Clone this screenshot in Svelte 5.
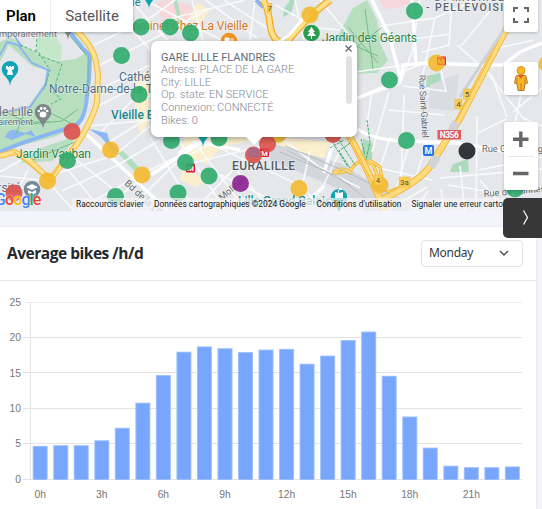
<script>
  const hours = [4.75, 4.85, 4.85, 5.55, 7.3, 10.85, 14.75, 18.05, 18.8, 18.55, 18, 18.35, 18.45, 16.35, 17.5, 19.7, 20.9, 14.65, 8.9, 4.5, 1.95, 1.75, 1.75, 1.85];
  const ticks = [25, 20, 15, 10, 5, 0];
  const y = (v) => 199.5 - v * 7.08;

  const green = '#2eab6b', yellow = '#f4b92c', red = '#dc504a';
  const stations = [
    [141, 27, green], [170, 27, green], [190.5, 33, green], [121.5, 55.5, green], [139, 94.5, green],
    [310, 15, yellow], [414.5, 11, green], [436.5, 63, yellow], [389.5, 80, green],
    [72, 131.5, red], [67.5, 160.5, green], [110.5, 150, yellow], [47.5, 181, yellow], [142, 175, yellow],
    [14, 193, red], [115.5, 196.5, green], [171.5, 140.5, green], [219, 138, green], [185.5, 162.5, green],
    [209, 176, green], [178, 193, green], [278, 134.5, yellow], [267.5, 144, red], [253.5, 155, red],
    [240.5, 183.5, '#8a218f'], [299, 188.5, yellow], [333, 134.5, red], [406.5, 140.5, green],
    [467, 151, '#202124'], [380, 185, yellow], [515, 189, green], [547, 64, yellow]
  ];

  const streets = [
    'M94 45L150 18L175 0', 'M98 66L155 38L207 10', 'M98 90L150 65', 'M105 0L165 66', 'M130 0L175 48',
    'M94 108L150 80', 'M88 126L150 120', 'M145 0L240 50', 'M192 0L205 48', 'M165 20L245 0', 'M206 0L257 38',
    'M224 0L270 30', 'M255 0L250 40', 'M295 0L305 45', 'M320 0L350 36',
    'M70 155L112 188L142 215', 'M60 160L94 201L105 215', 'M51 175L115 155L150 126',
    'M62 191L118 165L160 140', 'M77 210L140 175L210 140', 'M48 182L76 213', 'M28 170L18 190', 'M0 176L40 180',
    'M21 160L0 172', 'M101 132L132 101L150 96', 'M106 144L153 115', 'M100 211L143 178L185 154', 'M125 213L174 165L219 137',
    'M150 137L195 211', 'M170 127L222 205', 'M193 140L245 209', 'M206 142L297 184L333 216', 'M180 166L246 150L287 140',
    'M190 215L235 168L275 215', 'M219 174L294 211', 'M280 137L319 167L360 188', 'M348 73L406 65L437 64',
    'M381 26L435 18L475 0', 'M393 42L450 34', 'M399 73L425 63L480 64', 'M420 0L412 52L400 84', 'M435 18L421 83',
    'M452 0L449 45L422 52', 'M461 46L490 11', 'M457 45L492 76L507 117', 'M440 66L446 91L402 86',
    'M401 84L350 101', 'M372 91L367 125', 'M389 92L372 152', 'M404 95L401 185', 'M388 110L445 115',
    'M390 137L376 181', 'M410 141L396 190', 'M427 142L413 187', 'M370 166L432 180',
    'M453 140L475 151L504 147', 'M460 166L465 211', 'M477 116L476 211', 'M478 133L506 119', 'M479 170L542 157',
    'M440 178L542 169', 'M448 185L510 195L542 187', 'M480 180L505 210', 'M485 70L523 118L542 126',
    'M493 49L534 40', 'M513 112L542 88', 'M522 89L508 157L517 211', 'M428 191L413 213', 'M441 189L444 211',
    'M310 150L299 202', 'M340 151L320 192', 'M386 211L427 187', 'M275 5L318 28L340 30'
  ];
  const highways = 'M511 20L487 66L459 120Q440 150 431 165T383 199M344 127L355 146L369 174L385 211';
  const ramps = 'M350 171C358 157 372 158 376 172L382 188M352 174Q341 165 334 173L349 171M369 160L380 167L382 180M434 164Q415 184 385 193';
  const ring = 'M77 31Q92 45 96 61L98 74L97 102Q93 119 77 144L50 180L29 160L14 152L0 156';
</script>

<div class="page">
  <section class="map">
    <svg class="canvas" width="542" height="211" viewBox="0 0 542 211">
      <rect width="542" height="211" fill="#e5e7eb" />
      <path d="M0 42L10 37L36 53L58 33L76 31L87 52L87 105L80 125L54 137L0 151Z" fill="#b7dfbf" />
      <path d="M30 38L61 33L79 36L84 54L76 59L59 61L37 55Z" fill="#e5e7eb" />
      <path d="M36 56L37 37L52 32L62 46L61 60Z" fill="#c4e7ca" />
      <path d="M0 62L9 45L20 55L32 66L47 70L44 84L28 107L0 113Z" fill="#e5e7eb" />
      <path d="M20 163L38 149L76 136L65 153L51 161Z" fill="#b7dfbf" />
      <path d="M156 2L170 0L189 4L201 15L165 29Z" fill="#f6d8da" />
      <path d="M380 0H417L397 8L383 9Z" fill="#f6d8da" />
      <path d="M338 36L353 8L367 0L377 20L380 43L388 60L377 73L350 74L338 67Z" fill="#b7dfbf" />
      <path d="M284 9L290 0H295L291 13L283 17ZM427 76L440 73L442 87L426 87ZM453 164L468 159L469 172L450 172ZM363 138L373 144L372 159L361 164Z" fill="#addabd" />
      <path d="M118 153L122 150L140 168L135 172ZM173 0H177L183 25H179Z" fill="#b1dec0" />
      <path d="M133 81L149 69L150 119L141 136L136 118ZM197 3L210 10L201 23L189 18ZM184 137L275 137L330 142L323 161L290 151L255 140L221 147L207 164L180 154ZM183 166L207 181L196 187L180 180Z" fill="#fbf0ce" />
      <path d="M272 143L342 164L388 193L410 201V211H365L342 190L270 160Z" fill="#d3d7dc" />
      <path d="M430 85L459 73L455 111L429 108Z" fill="#dadce1" />

      <g fill="none" stroke="#f9fafb" stroke-width="1.6">
        {#each streets as d}<path {d} />{/each}
      </g>
      <g fill="none" stroke="#ffffff" stroke-width="3.4">
        <path d="M82 130L131 176L172 215M350 101L401 80L403 65L425 63L480 65L503 65L520 52L542 43M358 129Q372 140 406 141L458 143L504 151M178 154L196 142L240 150M372 0L389 35L401 80M412 0L416 65M151 175L200 143M297 184L308 202L324 186M333 143L324 173" />
      </g>
      <g fill="none" stroke="#8cb6f2" stroke-width="4">
        <path d="M70 32L82 48L90 55L89 78L87 96Q85 119 77 124C60 132 28 139 0 152" />
        <path d="M0 55L7 42L18 45L32 63L48 70L46 84L30 107L0 113M11 31L22 47" stroke-width="2" />
        <path d="M256 0L263 7" />
      </g>
      <path d="M5 137Q10 127 18 131T31 130L36 137L26 134L12 140ZM89 129L107 133L110 143L119 151L115 154L101 137Z" fill="#8db7f1" />
      <path d="M38 55L62 64L53 92L61 99L51 104M36 52L37 37M20 45L39 53L50 70L44 89" fill="none" stroke="#50b578" stroke-width="1" stroke-dasharray="3 2" />
      <path d="M3 111L30 124L62 121L78 109M5 122L50 122M25 111L16 134M48 112L75 125M30 161L75 142M342 40L378 56M340 60L381 28M365 9L373 69M348 27L378 63M70 36L88 57V96" fill="none" stroke="#75bb87" stroke-width="1" />

      <g fill="none" stroke-linejoin="round">
        <path d={ring} stroke="#f5be41" stroke-width="6" />
        <path d={ring} stroke="#fde293" stroke-width="3.8" />
        <path d="M51 178L75 142M14 152L49 181" stroke="#f4bd3f" stroke-width="1.3" />
        <path d="M263 0Q268 7 270 24T283 43M330 0Q306 18 287 42" stroke="#f3ab1d" stroke-width="7" />
        <path d="M263 0Q268 7 270 24T283 43M330 0Q306 18 287 42" stroke="#fde08a" stroke-width="4.5" />
        <path d="M308 13L289 35L278 43" stroke="white" stroke-width="3" />
        <path d={ramps} stroke="#f5b329" stroke-width="3.5" />
        <path d={ramps} stroke="#fddb7d" stroke-width="1.7" />
        <path d={highways} stroke="#f4b534" stroke-width="7" />
        <path d={highways} stroke="#fddb7d" stroke-width="5" />
        <path d="M509 20L484 69L456 121M349 137L378 194" stroke="#f4b334" stroke-width="1" />
        <path d="M456 122L450 134M437 156L431 167" stroke="#d1d3d6" stroke-width="8" />
        <path d="M505 28L480 66L460 97" stroke="#cfd2d5" stroke-width="3" />
        <path d="M285 146L345 171L390 194M280 152L337 176L374 205M287 150L350 185" stroke="#b9bec6" stroke-width="1" />
        <path d="M333 143L348 167M339 140L355 165M350 143L339 151L350 168M330 148L344 140M367 120L370 142L366 160M361 139L365 155" stroke="#3dac64" stroke-dasharray="3 1" />
      </g>

      <g class="halo">
        <text x="-6" y="37" font-size="9.3" fill="#6b7580" textLength="63">emporairement</text>
        <text x="-1" y="116" font-size="12" fill="#657080">le Lille</text>
        <text x="-2" y="125" font-size="9.5" fill="#657080" textLength="35">airement</text>
        <text x="119" y="81" font-size="12" fill="#4f6f87">Cathédrale</text>
        <text x="49" y="93" font-size="12" fill="#4f6f87">Notre-Dame-de-la-Tr</text>
        <text x="111" y="119" font-size="12" font-weight="500" fill="#16868d">Vieille Bourse</text>
        <text x="16" y="158" font-size="12" fill="#278343" textLength="75">Jardin Vauban</text>
        <text x="133" y="30" font-size="12" fill="#d57925" textLength="115">aminet Chez La Vieille</text>
        <text x="322" y="42" font-size="12" fill="#278343" textLength="95">Jardin des Géants</text>
        <text x="132" y="6" font-size="11" fill="#16868d">le</text>
        <text x="434" y="1" font-size="10.5" fill="#5b6067" textLength="70">ST-MAURICE</text>
        <text x="426" y="11" font-size="10.5" fill="#5b6067" font-weight="500" textLength="86">- PELLEVOISIN</text>
        <text x="232" y="170" font-size="12" fill="#515961" font-weight="500" textLength="63">EURALILLE</text>
        <text x="419" y="75" font-size="9" fill="#61676d" transform="rotate(87 419 75)" textLength="63">Rue Saint-Gabriel</text>
        <text x="482" y="152" font-size="9.3" fill="#61676d">Rue Gutenberg</text>
        <text x="484" y="197" font-size="9.3" fill="#61676d" transform="rotate(-5 484 197)">Rue de Cannes</text>
        <text x="124" y="184" font-size="9.5" fill="#61676d" transform="rotate(43 124 184)">Bd de la Liberté</text>
        <text x="222" y="201" font-size="9.5" fill="#61676d" transform="rotate(-40 222 201)">Molinel</text>
        <text x="238" y="205" font-size="12" font-weight="500" fill="#16868d">Lille Grand Palais</text>
        <text x="-9" y="192" font-size="12" fill="#657080">ersité</text>
      </g>

      {#each [[10, 69, '#12a5b8'], [149, -8, '#12a5b8'], [68, 23, '#80868b'], [43, 112, '#7e8788'], [203, 130, '#12a5b8'], [339, 197, '#12a5b8'], [32, 189, '#738a9b']] as [px, py, color]}
        <path d={`M${px} ${py + 17}Q${px} ${py + 12} ${px - 6} ${py + 6}A8.3 8.3 0 1 1 ${px + 6} ${py + 6}Q${px} ${py + 12} ${px} ${py + 17}Z`} fill={color} />
      {/each}
      <path d="M6 66V69L8 70L7 75H13L12 70L14 69V66H12V67H11V66H9V67H8V66Z" fill="white" />
      <g fill="white"><ellipse cx="43" cy="114.5" rx="3.4" ry="3" /><circle cx="38.8" cy="111" r="1.3" /><circle cx="41.2" cy="108.5" r="1.4" /><circle cx="44.8" cy="108.5" r="1.4" /><circle cx="47.2" cy="111" r="1.3" /></g>
      <path d="M26 187L32 184L38 187L32 190ZM28 190L32 192L36 190V193L32 195L28 193ZM335 195V192L338 193V190H339V188H342V190H339V193L343 192V198H335Z" fill="white" />
      <circle cx="229" cy="41" r="8.3" fill="#f29422" />
      <path d="M225 38H229V42H225ZM231 38V43M233 38V43" stroke="white" fill="white" />
      <circle cx="311.5" cy="33" r="8.3" fill="#2a9d4e" />
      <path d="M311.5 27L308 32H310L307 36H311V39H312V36H316L313 32H315Z" fill="white" />
      {#each [[190.5, 168], [264.5, 152.5], [441.5, 61]] as [mx, my]}
        <rect x={mx - 4.5} y={my - 4.5} width="9" height="9" rx="1" fill="#dc1736" />
        <text x={mx} y={my + 3} font-size="8" font-weight="700" text-anchor="middle" fill="white">M</text>
      {/each}
      {#each stations as [cx, cy, color]}
        <circle {cx} {cy} r="8.5" fill={color} fill-opacity=".9" />
      {/each}
      <rect x="248.5" y="148" width="10" height="9" rx="2" fill="#7772a8" opacity=".75" />
      <path d="M251 150H256V154H251ZM251 156L256 153" stroke="#e06364" fill="none" />
      <rect x="437" y="57" width="8.5" height="8" fill="#f4732b" opacity=".75" />
      <text x="441" y="64" font-size="8" font-weight="700" text-anchor="middle" fill="#f3b23c">M</text>
      <rect x="423" y="145" width="11" height="11" rx="2" fill="#1a73e8" />
      <text x="428.5" y="154" text-anchor="middle" font-size="9" font-weight="700" fill="white">M</text>
      <rect x="437.5" y="130" width="23.5" height="9.5" fill="#df5a5c" />
      <text x="449.2" y="138" text-anchor="middle" font-size="8.4" font-weight="700" fill="white" textLength="19">N356</text>
      {#each [[458.5, 104, '4'], [467, 94, '5'], [404.5, 182, '3a'], [378, 180, '4']] as [rx, ry, label]}
        <rect x={rx - (label.length > 1 ? 5.5 : 3.5)} y={ry - 5} width={label.length > 1 ? 11 : 7} height="10" fill="#f8ce50" stroke="#ecb73f" stroke-width=".5" />
        <text x={rx} y={ry + 3} text-anchor="middle" font-size="8" fill="#5b5237">{label}</text>
      {/each}
      <rect x="267" y="3" width="5" height="10" fill="#f8c64a" /><text x="267.5" y="11" font-size="8" fill="#634c1a">7</text>
    </svg>

    <div class="maptypes"><button class="chosen">Plan</button><button>Satellite</button></div>
    <div class="logo"><span class="blue">G</span><span class="red">o</span><span class="gold">o</span><span class="blue">g</span><span class="green">l</span><span class="red">e</span></div>
    <div class="attribution">
      <span style:width="78px">Raccourcis clavier</span><span style:width="162.5px">Données cartographiques ©2024 Google</span><span style:width="95px">Conditions d'utilisation</span><span class="last">Signaler une erreur cartographique</span>
    </div>

    <div class="popup">
      <div class="details">
        <strong>GARE LILLE FLANDRES</strong>
        <span>Adress: PLACE DE LA GARE</span><span>City: LILLE</span><span>Op. state: EN SERVICE</span><span>Connexion: CONNECTÉ</span><span>Bikes: 0</span>
      </div>
      <i class="thumb"></i>
      <svg class="close" width="9" height="9" viewBox="0 0 9 9"><path d="M1.5 1.5L7.5 7.5M7.5 1.5L1.5 7.5" stroke="#606468" stroke-width="1.2" /></svg>
      <svg class="tip" width="18" height="10"><path d="M0 0H18L9 9Z" fill="white" /></svg>
    </div>

    <div class="control fullscreen"><svg width="16" height="16" viewBox="0 0 16 16"><path d="M1 5V1H5M11 1H15V5M15 11V15H11M5 15H1V11" fill="none" stroke="#666" stroke-width="2" /></svg></div>
    <div class="control person"><svg width="18" height="27" viewBox="0 0 18 27"><path d="M4 11Q9 8 14 11L15.5 18L13 19L12 25.5H6L5 19L2.5 18Z" fill="#f9b624" stroke="#b67b32" /><path d="M6 10L9 14L12 10Z" fill="#db5b2d" /><path d="M5 13V19M13 13V19M9 18V25" fill="none" stroke="#c9792f" /><circle cx="9" cy="5.5" r="4" fill="#fbb91c" stroke="#d58d21" /></svg></div>
    <div class="control zooming"><svg width="34" height="68" viewBox="0 0 34 68"><path d="M9 17.2H24.5M16.8 9.5V25M9 51.5H24.5" stroke="#666" stroke-width="3.4" /><path d="M4 34.5H30" stroke="#e6e6e6" /></svg></div>
  </section>

  <button class="drawer" aria-label="Open"><svg width="8" height="18" viewBox="0 0 8 18"><path d="M1.5 1.5L5.5 8.5L1.5 15.5" fill="none" stroke="white" stroke-width="1.2" /></svg></button>

  <section class="card">
    <header><h2>Average bikes /h/d</h2><div class="select"><span>Monday</span><svg width="10" height="7" viewBox="0 0 10 7"><path d="M1 1L5 5L9 1" fill="none" stroke="#444b52" stroke-width="1.4" /></svg></div></header>
    <svg class="chart" width="536" height="228" viewBox="0 0 536 228">
      {#each ticks as tick}
        <path d={`M23 ${Math.round(y(tick)) - .5}H522`} stroke={tick === 25 ? '#eeeeee' : '#e3e3e3'} />
        <text x="21" y={y(tick) + 3.2} text-anchor="end">{tick}</text>
      {/each}
      <path d="M30.5 22V199" stroke="#e4e4e4" />
      {#each hours as value, hour}
        {@const x = 32.7 + hour * 20.53}
        <rect {x} y={y(value)} width="15" height={value * 7.08} fill="#9cc0ff" />
        <rect x={x + 1} y={y(value) + 1} width="13" height={value * 7.08 - 1} fill="#78a6fc" />
        {#if hour % 3 === 0}<text x={x + 7.5} y="218" text-anchor="middle">{hour}h</text>{/if}
      {/each}
    </svg>
  </section>
</div>

<style>
  :global(body) { margin: 0; }
  * { box-sizing: border-box; }
  button { border: 0; padding: 0; font: inherit; color: inherit; background: none; }
  .page { position: relative; width: 542px; height: 509px; overflow: hidden; background: #f4f4fd; font-family: Roboto, sans-serif; }
  .map { position: relative; height: 211px; overflow: hidden; }
  .canvas { display: block; }
  .halo { paint-order: stroke; stroke: #ffffff99; stroke-width: 1.2px; }
  .maptypes { position: absolute; top: 0; left: 0; width: 133px; height: 32px; display: flex; align-items: center; background: white; color: #565656; font-size: 15px; box-shadow: 0 1px 3px #0004; }
  .maptypes button { width: 82px; height: 32px; }
  .maptypes .chosen { width: 51px; padding-right: 8px; color: #000; font-weight: 600; border-right: 1px solid #eee; }
  .logo { position: absolute; left: -5px; top: 190px; font: 500 16px/19px Roboto, sans-serif; letter-spacing: -.9px; text-shadow: 0 0 2px white; }
  .blue { color: #4285f4; } .red { color: #ea4335; } .gold { color: #fbbc04; } .green { color: #34a853; }
  .attribution { position: absolute; left: 72px; right: 0; top: 198px; height: 13px; overflow: hidden; display: flex; white-space: nowrap; color: #111; background: #f5f5f5b8; font-size: 8.4px; line-height: 13px; }
  .attribution span { flex: none; padding-left: 4px; }
  .attribution .last { color: #222; }
  .popup { position: absolute; left: 151px; top: 41px; width: 206px; height: 96px; border-radius: 7px; background: white; box-shadow: 0 2px 6px #0005; }
  .details { display: flex; flex-direction: column; padding: 10.5px 10px; color: #7f8896; font-size: 11px; line-height: 12.65px; font-weight: 300; }
  .details strong { color: #5f6b7b; font-weight: 400; }
  .thumb { position: absolute; left: 195px; top: 15px; width: 6px; height: 48px; border-radius: 3px; background: #e0e1e3; }
  .close { position: absolute; left: 193px; top: 3px; }
  .tip { position: absolute; left: 94px; top: 95px; }
  .control { position: absolute; left: 504px; width: 34px; display: grid; place-items: center; background: white; border-radius: 2px; box-shadow: 0 1px 3px #0003; }
  .fullscreen { top: -2px; height: 34px; }
  .person { top: 62px; height: 33px; }
  .zooming { top: 122px; height: 68px; }
  .drawer { position: absolute; z-index: 2; left: 503px; top: 198px; width: 44px; height: 40px; padding-left: 19px; border-radius: 5px; background: #373737; }
  .drawer svg { display: block; }
  .card { width: 536px; height: 282px; margin-top: 16px; background: white; box-shadow: 0 0 2px #d9dce6; }
  header { height: 54px; padding: 0 13px 0 7px; display: flex; align-items: center; justify-content: space-between; border-bottom: 1px solid #e7e8e9; font-family: "Noto Sans", sans-serif; }
  h2 { margin: 0; padding-bottom: 2px; color: #24292f; font-family: "Open Sans", sans-serif; font-size: 15.5px; font-weight: 700; letter-spacing: -.48px; white-space: nowrap; }
  .select { width: 102px; height: 27px; padding: 0 13px 1px 7px; display: flex; align-items: center; justify-content: space-between; border: 1px solid #e2e4e7; border-radius: 4px; color: #34393f; font-size: 12px; letter-spacing: -.3px; }
  .select span { padding-bottom: 2px; }
  .chart { display: block; margin-top: -1px; font: 10.3px "Liberation Sans", sans-serif; }
  .chart text { fill: #777; }
</style>
